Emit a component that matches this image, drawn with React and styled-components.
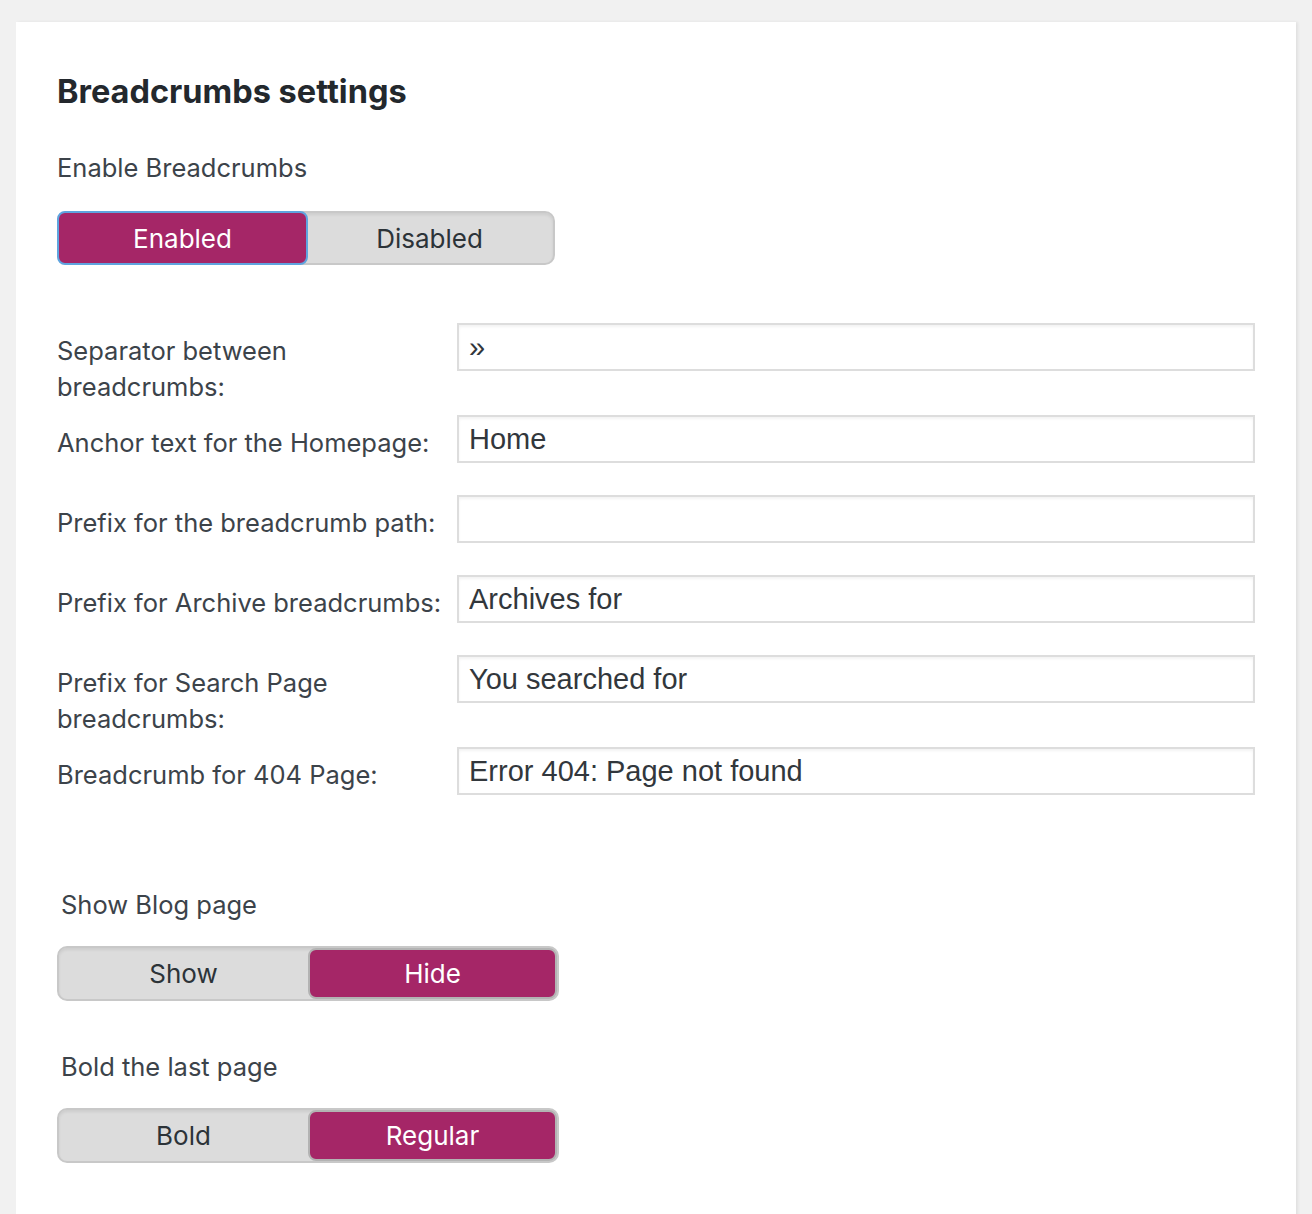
import React from "react";
import styled, { createGlobalStyle } from "styled-components";

const GlobalStyle = createGlobalStyle`
  * { box-sizing: border-box; }
  body {
    margin: 0;
    background: #f1f1f1;
    font-family: Inter, "Noto Sans", sans-serif;
  }
`;

const Page = styled.div`
  padding: 22px 16px 0;
`;

const Card = styled.div`
  background: #fff;
  padding: 48px 41px 60px;
  min-height: 1192px;
  box-shadow: 2px 0 3px rgba(0, 0, 0, 0.07);
`;

const Heading = styled.h2`
  margin: 2px 0 38px;
  font-size: 32.5px;
  line-height: 40px;
  font-weight: 700;
  color: #23282d;
`;

const Label = styled.div`
  font-size: 25.5px;
  line-height: 36px;
  color: #3c434a;
  margin-left: ${(props) => props.indent || 0}px;
  margin-bottom: ${(props) => props.gap ?? 25}px;
`;

const Toggle = styled.div`
  display: grid;
  grid-template-columns: 1fr 1fr;
  width: ${(props) => props.width}px;
  height: ${(props) => props.height || 54}px;
  background: #dcdcdc;
  border: 2px solid #c8c8c8;
  border-radius: 10px;
  box-shadow: inset 0 2px 3px rgba(0, 0, 0, 0.07);
`;

const Segment = styled.div`
  display: flex;
  align-items: center;
  justify-content: center;
  font-size: 26px;
  color: ${(props) => (props.active ? "#fff" : "#2c3338")};
  background: ${(props) => (props.active ? "#a52667" : "transparent")};
  border-radius: 8px;
  border: ${(props) =>
    props.active ? `2px solid ${props.focus ? "#5fa4df" : "#b3b3b3"}` : "none"};
  margin: ${(props) => (props.focus ? "-2px" : "0")};
`;

const Table = styled.div`
  margin-top: 42px;
`;

const Row = styled.div`
  display: grid;
  grid-template-columns: 400px 1fr;
  align-items: start;
`;

const RowLabel = styled.div`
  padding-top: 26px;
  margin-bottom: -6px;
  font-size: 25.5px;
  line-height: 36px;
  color: #3c434a;
  white-space: nowrap;
`;

const Field = styled.div`
  padding: 16px 0;
`;

const Input = styled.input`
  display: block;
  width: 100%;
  height: 48px;
  padding: 1px 10px 0;
  border: 2px solid #dddddd;
  border-radius: 0;
  box-shadow: inset 0 2px 3px rgba(0, 0, 0, 0.05);
  background: #fff;
  font-family: "Liberation Sans", Arial, sans-serif;
  font-size: 29px;
  color: #32373c;
  outline: none;
`;

const Section = styled.div`
  margin-top: ${(props) => props.top}px;
`;

const fields = [
  { label: ["Separator between", "breadcrumbs:"], value: "»" },
  { label: ["Anchor text for the Homepage:"], value: "Home" },
  { label: ["Prefix for the breadcrumb path:"], value: "" },
  { label: ["Prefix for Archive breadcrumbs:"], value: "Archives for" },
  { label: ["Prefix for Search Page", "breadcrumbs:"], value: "You searched for" },
  { label: ["Breadcrumb for 404 Page:"], value: "Error 404: Page not found" },
];

const App = () => {
  return (
    <>
      <GlobalStyle />
      <Page>
        <Card>
          <Heading>Breadcrumbs settings</Heading>

          <Label>Enable Breadcrumbs</Label>
          <Toggle width={498}>
            <Segment active focus>Enabled</Segment>
            <Segment>Disabled</Segment>
          </Toggle>

          <Table>
            {fields.map((f) => (
              <Row key={f.label.join(" ")}>
                <RowLabel>
                  {f.label.map((line, i) => (
                    <div key={i}>{line}</div>
                  ))}
                </RowLabel>
                <Field>
                  <Input defaultValue={f.value} />
                </Field>
              </Row>
            ))}
          </Table>

          <Section top={76}>
            <Label indent={4} gap={23}>Show Blog page</Label>
            <Toggle width={502} height={55}>
              <Segment>Show</Segment>
              <Segment active>Hide</Segment>
            </Toggle>
          </Section>

          <Section top={48}>
            <Label indent={4} gap={23}>Bold the last page</Label>
            <Toggle width={502} height={55}>
              <Segment>Bold</Segment>
              <Segment active>Regular</Segment>
            </Toggle>
          </Section>
        </Card>
      </Page>
    </>
  );
};

export default App;
